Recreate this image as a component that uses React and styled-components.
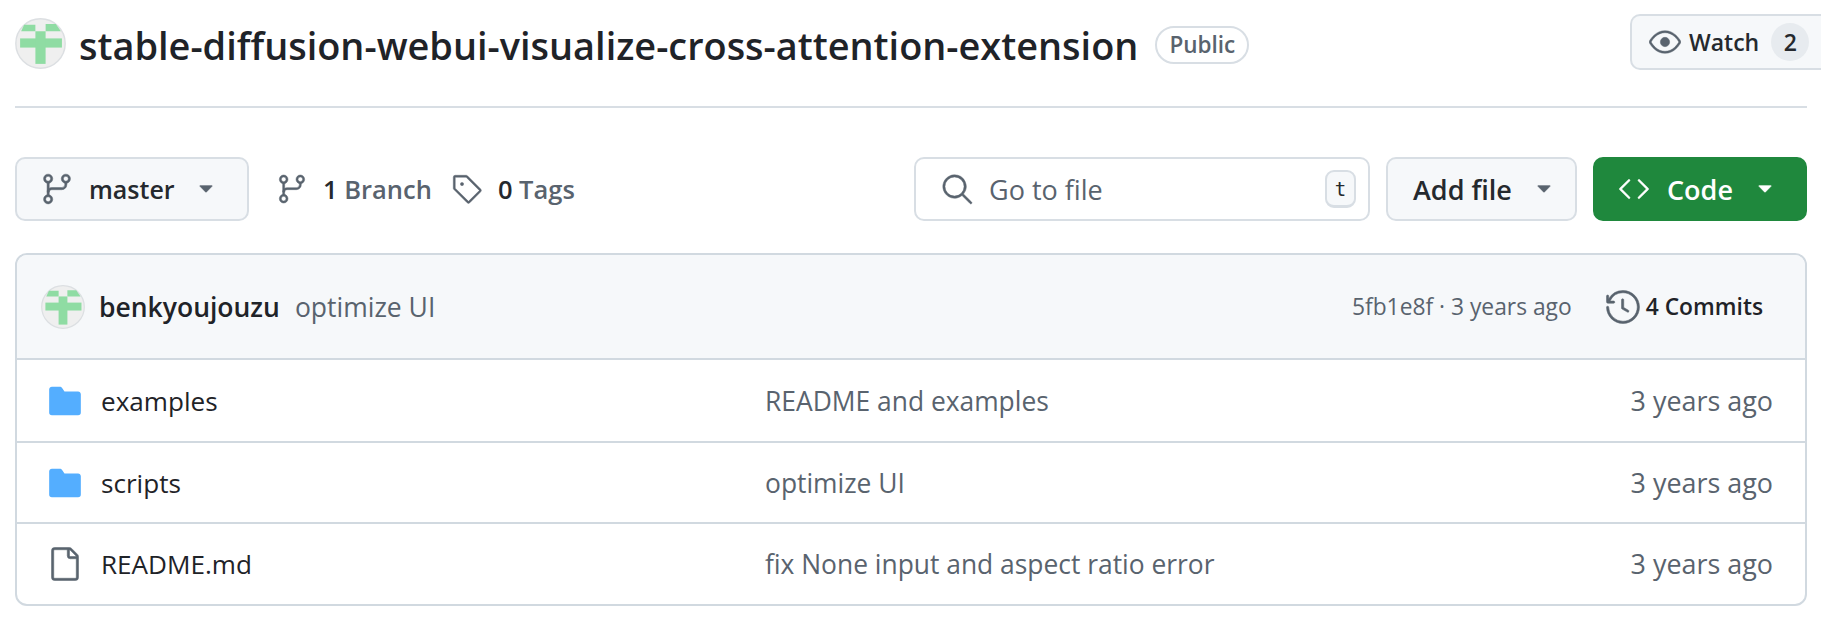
import React from "react";
import styled, { createGlobalStyle } from "styled-components";
import { GoGitBranch, GoTag, GoEye, GoHistory, GoFileDirectoryFill, GoFile, GoCode, GoSearch, GoTriangleDown } from "react-icons/go";

const Global = createGlobalStyle`
  html, body { margin: 0; padding: 0; background: #fff; overflow: hidden; }
  body { font-family: "Open Sans", "Noto Sans", "Liberation Sans", sans-serif; color: #1f2328; }
`;

const Page = styled.div`
  width: 1821px;
  height: 619px;
  padding: 14px 14px 0 15px;
  box-sizing: border-box;
  overflow: hidden;
`;

const Head = styled.header`
  display: flex;
  align-items: flex-start;
  height: 92px;
  border-bottom: 2px solid #d8dee4;
`;

const AvatarSvg = styled.svg`
  flex: none;
  display: block;
  margin-top: ${(p) => p.$mt || 0}px;
`;

const TitleWrap = styled.div`
  display: flex;
  align-items: center;
  height: 61px;
  flex: 1;
  min-width: 0;
`;

const Title = styled.h1`
  margin: 0 0 0 13px;
  font-size: 37.9px;
  font-weight: 600;
  white-space: nowrap;
  color: #1f2328;
`;

const Pill = styled.span`
  margin-left: 17px;
  height: 38px;
  width: 94px;
  box-sizing: border-box;
  display: flex;
  align-items: center;
  justify-content: center;
  border: 2px solid #d8dee4;
  border-radius: 20px;
  color: #59636e;
  font-size: 22.5px;
  font-weight: 600;
`;

const Watch = styled.div`
  flex: none;
  margin-right: -14px;
  width: 191px;
  height: 56px;
  box-sizing: border-box;
  display: flex;
  align-items: center;
  gap: 8px;
  padding-left: 17px;
  background: #f6f8fa;
  border: 2px solid #d8dee4;
  border-right: none;
  border-radius: 10px 0 0 10px;
  font-size: 23px;
  font-weight: 600;
  color: #59636e;
  svg { stroke: currentColor; stroke-width: 0.35; }
`;

const WatchLabel = styled.span`
  color: #25292e;
`;

const Counter = styled.span`
  margin-left: 4px;
  width: 38px;
  height: 38px;
  display: flex;
  align-items: center;
  justify-content: center;
  border-radius: 50%;
  background: #e7ebef;
  color: #25292e;
`;

const Toolbar = styled.div`
  display: flex;
  align-items: center;
  margin-top: 49px;
  height: 64px;
`;

const Button = styled.div`
  flex: none;
  box-sizing: border-box;
  width: ${(p) => p.$w}px;
  height: 64px;
  display: flex;
  align-items: center;
  background: ${(p) => (p.$primary ? "#1f883d" : "#f6f8fa")};
  color: ${(p) => (p.$primary ? "#fff" : "#25292e")};
  border: 2px solid ${(p) => (p.$primary ? "#1f883d" : "#d8dee4")};
  border-radius: 10px;
  font-size: ${(p) => p.$fs || 27}px;
  font-weight: 600;
  padding-left: ${(p) => p.$pad}px;
  margin-left: ${(p) => p.$ml || 0}px;
  svg { flex: none; stroke: currentColor; stroke-width: 0.35; }
`;

const ButtonLabel = styled.span`
  margin-left: ${(p) => p.$ml || 0}px;
  margin-right: ${(p) => p.$mr || 0}px;
`;

const Counts = styled.div`
  display: flex;
  align-items: center;
  margin-left: 27px;
  flex: 1;
  font-size: 25.5px;
  color: #59636e;
  svg { flex: none; color: #59636e; stroke: currentColor; stroke-width: 0.35; }
`;

const Count = styled.span`
  margin-left: ${(p) => p.$ml}px;
  margin-right: 20px;
  font-weight: 600;
  b { color: #25292e; font-weight: 600; }
`;

const Search = styled.div`
  flex: none;
  box-sizing: border-box;
  width: 456px;
  height: 64px;
  display: flex;
  align-items: center;
  border: 2px solid #d8dee4;
  border-radius: 10px;
  padding: 0 12px 0 24px;
  color: #59636e;
  font-size: 27px;
  svg { stroke: currentColor; stroke-width: 0.35; }
`;

const SearchText = styled.span`
  margin-left: 15px;
  flex: 1;
`;

const Kbd = styled.kbd`
  width: 31px;
  height: 38px;
  box-sizing: border-box;
  display: flex;
  align-items: center;
  justify-content: center;
  border: 2px solid #d8dee4;
  border-bottom-width: 3px;
  border-radius: 9px;
  background: #f6f8fa;
  font-family: "DejaVu Sans Mono", "Liberation Mono", monospace;
  font-size: 19px;
  color: #25292e;
`;

const Card = styled.section`
  margin-top: 32px;
  border: 2px solid #d1d9e0;
  border-radius: 12px;
  overflow: hidden;
  width: 1792px;
  box-sizing: border-box;
`;

const CommitRow = styled.div`
  height: 105px;
  box-sizing: border-box;
  display: flex;
  align-items: center;
  padding: 0 42px 0 24px;
  background: #f6f8fa;
  border-bottom: 2px solid #d1d9e0;
  font-size: 26.5px;
`;

const Author = styled.span`
  margin-left: 14px;
  font-weight: 600;
  color: #1f2328;
`;

const Message = styled.span`
  margin-left: 15px;
  flex: 1;
  color: #59636e;
`;

const Meta = styled.span`
  color: #59636e;
  font-size: 22.8px;
`;

const Commits = styled.span`
  margin-left: 33px;
  display: flex;
  align-items: center;
  gap: 5px;
  font-size: 22.8px;
  font-weight: 600;
  color: #1f2328;
  svg { color: #59636e; stroke: currentColor; stroke-width: 0.35; }
`;

const Row = styled.div`
  height: 81.2px;
  box-sizing: border-box;
  display: grid;
  grid-template-columns: 716px 1fr auto;
  align-items: center;
  padding: 0 32px;
  font-size: 26.4px;
  border-top: ${(p) => (p.$first ? "none" : "2px solid #d1d9e0")};
`;

const Name = styled.span`
  display: flex;
  align-items: center;
  color: #1f2328;
  font-size: 26.1px;
`;

const IconSlot = styled.span`
  width: 32px;
  display: flex;
  justify-content: center;
  color: ${(p) => (p.$dir ? "#54aeff" : "#59636e")};
  margin-right: 20px;
  svg { flex: none; ${(p) => (p.$dir ? "" : "stroke: currentColor; stroke-width: 0.35;")} }
`;

const Muted = styled.span`
  color: #59636e;
`;

const Age = styled.span`
  color: #59636e;
  font-size: 26.9px;
`;

const Avatar = ({ size, mt }) => (
  <AvatarSvg $mt={mt} width={size} height={size} viewBox="0 0 50 50" aria-hidden="true">
    <circle cx="25" cy="25" r="24.2" fill="#efefef" stroke="#dcdfe2" strokeWidth="1.4" />
    <g fill="#8fdca3">
      <path d="M9 6.5 h11 v6.5 H6 Z" />
      <path d="M30 6 h10 l5 7 H30 Z" />
      <rect x="5" y="20" width="41" height="9" />
      <rect x="20" y="13" width="10" height="32" />
    </g>
  </AvatarSvg>
);

const rows = [
  { name: "examples", dir: true, msg: "README and examples" },
  { name: "scripts", dir: true, msg: "optimize UI" },
  { name: "README.md", dir: false, msg: "fix None input and aspect ratio error" },
];

export default function App() {
  return (
    <Page>
      <Global />
      <Head>
        <Avatar size={51} mt={4} />
        <TitleWrap>
          <Title>stable-diffusion-webui-visualize-cross-attention-extension</Title>
          <Pill>Public</Pill>
        </TitleWrap>
        <Watch>
          <GoEye size={32} />
          <WatchLabel>Watch</WatchLabel>
          <Counter>2</Counter>
        </Watch>
      </Head>
      <Toolbar>
        <Button $w={234} $pad={23} $fs={25}>
          <GoGitBranch size={34} color="#59636e" />
          <ButtonLabel $ml={15} $mr={19}>master</ButtonLabel>
          <GoTriangleDown size={24} color="#59636e" />
        </Button>
        <Counts>
          <GoGitBranch size={32} />
          <Count $ml={15}><b>1</b> Branch</Count>
          <GoTag size={31} />
          <Count $ml={15}><b>0</b> Tags</Count>
        </Counts>
        <Search>
          <GoSearch size={34} />
          <SearchText>Go to file</SearchText>
          <Kbd>t</Kbd>
        </Search>
        <Button $w={191} $pad={25} $ml={16}>
          <ButtonLabel $mr={20}>Add file</ButtonLabel>
          <GoTriangleDown size={24} color="#59636e" />
        </Button>
        <Button $w={214} $pad={23} $ml={16} $primary>
          <GoCode size={32} />
          <ButtonLabel $ml={17} $mr={20}>Code</ButtonLabel>
          <GoTriangleDown size={24} />
        </Button>
      </Toolbar>
      <Card>
        <CommitRow>
          <Avatar size={44} />
          <Author>benkyoujouzu</Author>
          <Message>optimize UI</Message>
          <Meta>5fb1e8f · 3 years ago</Meta>
          <Commits><GoHistory size={36} />4 Commits</Commits>
        </CommitRow>
        {rows.map((r, i) => (
          <Row key={r.name} $first={i === 0}>
            <Name>
              <IconSlot $dir={r.dir}>
                {r.dir ? <GoFileDirectoryFill size={38} /> : <GoFile size={36} />}
              </IconSlot>
              {r.name}
            </Name>
            <Muted>{r.msg}</Muted>
            <Age>3 years ago</Age>
          </Row>
        ))}
      </Card>
    </Page>
  );
}
